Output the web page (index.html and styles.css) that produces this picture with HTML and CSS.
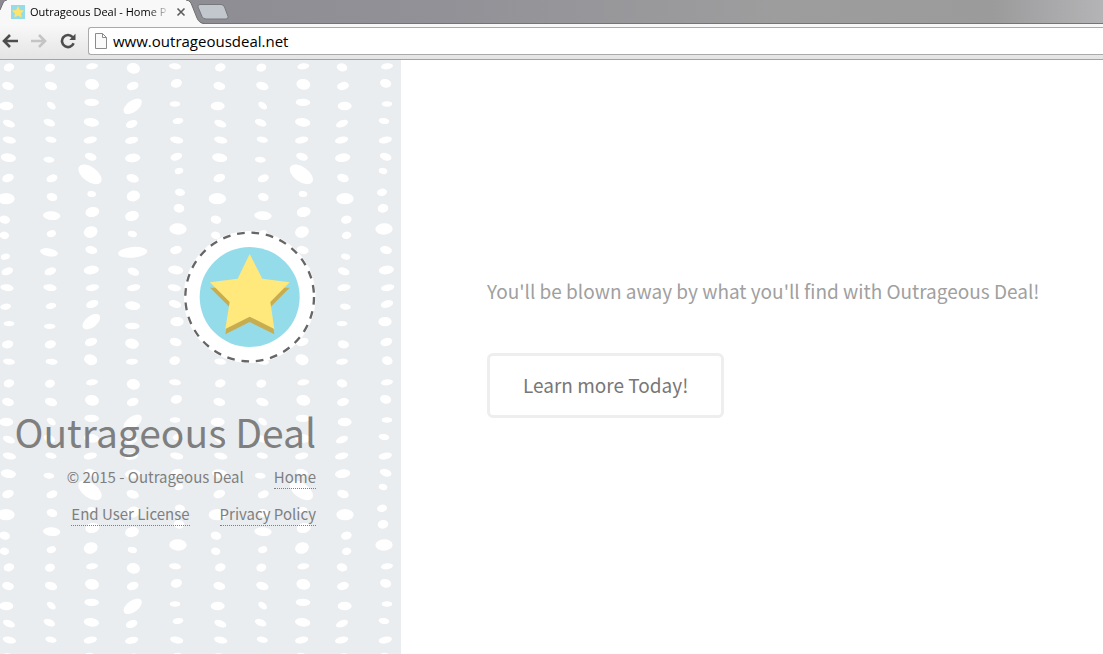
FILE: index.html
```html
<!DOCTYPE html>
<html lang="en">
<head>
    <meta charset="UTF-8">
    <meta name="viewport" content="width=device-width, initial-scale=1.0">
    <title>Outrageous Deal - Home Page</title>
    <link rel="stylesheet" href="styles.css">
</head>
<body>
    <header class="browser">
        <div class="tabstrip">
            <div class="tab">
                <svg class="tab-shape" width="204" height="24" viewBox="0 0 204 24" aria-hidden="true">
                    <path d="M0 24V10L3 3Q4 0 7 0H186Q189 0 191 3L197 18Q199 23 204 24Z" fill="#f8f8f8"/>
                    <path d="M0 10L3 3Q4 0 7 0M186 0Q189 0 191 3L197 18Q199 23 204 23.500" fill="none" stroke="#6f6f72"/>
                </svg>
                <svg class="favicon" width="14" height="14" viewBox="0 0 14 14" aria-hidden="true">
                    <rect width="14" height="14" fill="#95dceb"/>
                    <path d="M7 1L8.800 5L13 5.500L10 8.500L10.700 12.600L7 10.600L3.300 12.600L4 8.500L1 5.500L5.200 5Z" fill="#ffe36b"/>
                </svg>
                <span class="tab-title">Outrageous Deal - Home P</span>
                <button class="tab-close" type="button" aria-label="Close tab">
                    <svg width="10" height="10" viewBox="0 0 10 10"><path d="M1.500 1.500L8.500 8.500M8.500 1.500L1.500 8.500" stroke="#5c5c5c" stroke-width="1.600"/></svg>
                </button>
            </div>
            <button class="new-tab" type="button" aria-label="New tab">
                <svg width="32" height="16" viewBox="0 0 32 16"><path d="M3 .5H24Q26.500 .5 27.500 3L31 12.500Q31.500 15 29 15H9Q6 15 5 12.500L1 3Q.500 .5 3 .5Z" fill="#c2c7cd" stroke="#77787c"/></svg>
            </button>
        </div>
        <nav class="toolbar">
            <button type="button" aria-label="Back">
                <svg width="18" height="16" viewBox="0 0 18 16"><path d="M10 2L4 8L10 14M4.500 8H18" fill="none" stroke="#4d4d4d" stroke-width="2.600"/></svg>
            </button>
            <button type="button" aria-label="Forward">
                <svg width="18" height="16" viewBox="0 0 18 16"><path d="M9 2L15 8L9 14M14.500 8H1" fill="none" stroke="#c4c4c4" stroke-width="2.600"/></svg>
            </button>
            <button type="button" aria-label="Reload">
                <svg width="16" height="16" viewBox="0 0 16 16"><path d="M12.600 4.200A6 6 0 1 0 13.600 10.200" fill="none" stroke="#4d4d4d" stroke-width="2.600"/><path d="M15.500 .8V7H9.300Z" fill="#4d4d4d"/></svg>
            </button>
            <div class="address">
                <svg width="12" height="16" viewBox="0 0 12 16" aria-hidden="true"><path d="M.5 .5H7.500L11.500 4.500V15.500H.5ZM7.500 .5V4.500H11.500" fill="#fafafa" stroke="#8b8b8b"/></svg>
                <input type="text" aria-label="Address" value="www.outrageousdeal.net">
            </div>
        </nav>
    </header>

    <div class="page">
        <aside class="sidebar">
            <svg class="beads" width="401" height="594" viewBox="0 6 1203 1782" aria-hidden="true">
                <defs>
                    <!-- upper part of each column -->
                    <g id="a0">
                        <ellipse rx="16" ry="12" transform="translate(27 28) rotate(-15)"/>
                        <ellipse rx="18" ry="12" transform="translate(24 84) rotate(15)"/>
                        <ellipse rx="21" ry="13" transform="translate(19 144)"/>
                        <ellipse rx="19" ry="10" transform="translate(27 197) rotate(22)"/>
                        <ellipse rx="20" ry="10" transform="translate(28 246) rotate(12)"/>
                        <ellipse rx="23" ry="13" transform="translate(25 299) rotate(8)"/>
                        <ellipse rx="18" ry="12" transform="translate(24 360) rotate(-20)"/>
                        <ellipse rx="26" ry="17" transform="translate(18 422)"/>
                        <ellipse rx="16" ry="12" transform="translate(14 485) rotate(12)"/>
                        <ellipse rx="14" ry="11" transform="translate(13 532) rotate(10)"/>
                    </g>
                    <g id="a1">
                        <ellipse rx="15" ry="12" transform="translate(150 29) rotate(-15)"/>
                        <ellipse rx="19" ry="12" transform="translate(153 84) rotate(18)"/>
                        <ellipse rx="15" ry="9" transform="translate(154 143) rotate(38)"/>
                        <ellipse rx="18" ry="10" transform="translate(148 194) rotate(22)"/>
                        <ellipse rx="17" ry="9" transform="translate(153 245) rotate(12)"/>
                        <ellipse rx="16" ry="9" transform="translate(147 305) rotate(5)"/>
                        <ellipse rx="17" ry="11" transform="translate(156 361) rotate(-20)"/>
                        <ellipse rx="16" ry="12" transform="translate(156 417) rotate(15)"/>
                        <ellipse rx="26" ry="13" transform="translate(155 473) rotate(4)"/>
                        <ellipse rx="14" ry="10" transform="translate(154 527) rotate(-15)"/>
                    </g>
                    <g id="a2">
                        <ellipse rx="18" ry="9" transform="translate(276 25) rotate(-8)"/>
                        <ellipse rx="21" ry="16" transform="translate(276 79) rotate(10)"/>
                        <ellipse rx="22" ry="11" transform="translate(275 133) rotate(2)"/>
                        <ellipse rx="23" ry="13" transform="translate(274 193) rotate(8)"/>
                        <ellipse rx="20" ry="10" transform="translate(271 246) rotate(-10)"/>
                        <ellipse rx="18" ry="11" transform="translate(272 296) rotate(18)"/>
                        <ellipse rx="40" ry="22" transform="translate(270 349) rotate(36)"/>
                        <ellipse rx="13" ry="9" transform="translate(275 408) rotate(8)"/>
                        <ellipse rx="21" ry="15" transform="translate(277 462) rotate(-12)"/>
                        <ellipse rx="21" ry="17" transform="translate(272 522) rotate(-15)"/>
                    </g>
                    <g id="a3">
                        <ellipse rx="20" ry="16" transform="translate(400 31) rotate(12)"/>
                        <ellipse rx="18" ry="12" transform="translate(398 84) rotate(-18)"/>
                        <ellipse rx="32" ry="17" transform="translate(398 145) rotate(-36)"/>
                        <ellipse rx="18" ry="11" transform="translate(395 198) rotate(-20)"/>
                        <ellipse rx="20" ry="10" transform="translate(395 247) rotate(-12)"/>
                        <ellipse rx="23" ry="13" transform="translate(398 300) rotate(-6)"/>
                        <ellipse rx="19" ry="12" transform="translate(398 361) rotate(18)"/>
                        <ellipse rx="20" ry="16" transform="translate(400 414) rotate(-12)"/>
                        <ellipse rx="21" ry="15" transform="translate(396 474) rotate(-15)"/>
                        <ellipse rx="14" ry="9" transform="translate(397 528) rotate(12)"/>
                    </g>
                    <g id="a4">
                        <ellipse rx="18" ry="9" transform="translate(525 25) rotate(8)"/>
                        <ellipse rx="17" ry="13" transform="translate(529 76) rotate(-15)"/>
                        <ellipse rx="16" ry="8" transform="translate(525 138)"/>
                        <ellipse rx="16" ry="9" transform="translate(534 189) rotate(-8)"/>
                        <ellipse rx="20" ry="10" transform="translate(530 246) rotate(10)"/>
                        <ellipse rx="18" ry="11" transform="translate(529 296) rotate(-18)"/>
                        <ellipse rx="13" ry="9" transform="translate(537 339) rotate(-12)"/>
                        <ellipse rx="15" ry="11" transform="translate(540 403) rotate(12)"/>
                        <ellipse rx="16" ry="13" transform="translate(537 451) rotate(12)"/>
                        <ellipse rx="26" ry="17" transform="translate(534 513) rotate(2)"/>
                    </g>
                    <!-- lower part of each column -->
                    <g id="b0">
                        <ellipse rx="14" ry="9" transform="translate(16 596) rotate(-15)"/>
                        <ellipse rx="18" ry="11" transform="translate(22 640) rotate(-20)"/>
                        <ellipse rx="20" ry="10" transform="translate(21 689) rotate(8)"/>
                        <ellipse rx="16" ry="9" transform="translate(17 746) rotate(-8)"/>
                        <ellipse rx="16" ry="8" transform="translate(27 797)"/>
                        <ellipse rx="17" ry="12" transform="translate(23 859) rotate(-10)"/>
                        <ellipse rx="18" ry="9" transform="translate(27 911) rotate(8)"/>
                    </g>
                    <g id="b1">
                        <ellipse rx="27" ry="12" transform="translate(147 583) rotate(10)"/>
                        <ellipse rx="18" ry="11" transform="translate(151 640) rotate(-20)"/>
                        <ellipse rx="20" ry="10" transform="translate(150 689) rotate(8)"/>
                        <ellipse rx="16" ry="9" transform="translate(153 744) rotate(-12)"/>
                        <ellipse rx="17" ry="8" transform="translate(149 805)"/>
                        <ellipse rx="17" ry="12" transform="translate(151 859) rotate(-12)"/>
                        <ellipse rx="18" ry="9" transform="translate(155 911) rotate(5)"/>
                    </g>
                    <g id="b2">
                        <ellipse rx="18" ry="12" transform="translate(274 576) rotate(15)"/>
                        <ellipse rx="23" ry="13" transform="translate(274 636) rotate(-8)"/>
                        <ellipse rx="20" ry="10" transform="translate(277 689) rotate(-10)"/>
                        <ellipse rx="19" ry="11" transform="translate(277 738) rotate(-20)"/>
                        <ellipse rx="31" ry="17" transform="translate(274 791) rotate(-38)"/>
                        <ellipse rx="19" ry="12" transform="translate(273 852) rotate(-18)"/>
                        <ellipse rx="20" ry="16" transform="translate(272 905) rotate(20)"/>
                    </g>
                    <g id="b3">
                        <ellipse rx="44" ry="16" transform="translate(398 583) rotate(-5)"/>
                        <ellipse rx="18" ry="11" transform="translate(400 641) rotate(22)"/>
                        <ellipse rx="20" ry="10" transform="translate(401 689) rotate(-10)"/>
                        <ellipse rx="23" ry="13" transform="translate(398 743) rotate(8)"/>
                        <ellipse rx="22" ry="10" transform="translate(397 804) rotate(2)"/>
                        <ellipse rx="21" ry="15" transform="translate(396 857) rotate(12)"/>
                        <ellipse rx="18" ry="9" transform="translate(396 911) rotate(-3)"/>
                    </g>
                    <g id="b4">
                        <ellipse rx="18" ry="12" transform="translate(528 576) rotate(-15)"/>
                        <ellipse rx="23" ry="13" transform="translate(527 636) rotate(8)"/>
                        <ellipse rx="20" ry="10" transform="translate(523 689) rotate(10)"/>
                        <ellipse rx="19" ry="11" transform="translate(525 738) rotate(15)"/>
                        <ellipse rx="20" ry="14" transform="translate(531 791)"/>
                        <ellipse rx="18" ry="12" transform="translate(527 852) rotate(18)"/>
                        <ellipse rx="16" ry="13" transform="translate(524 908) rotate(-15)"/>
                    </g>
                    <!-- full rows: five columns, three repeated, two mirrored -->
                    <g id="upper">
                        <use href="#a0"/><use href="#a1"/><use href="#a2"/><use href="#a3"/><use href="#a4"/>
                        <use href="#a0" x="634"/><use href="#a1" x="634"/><use href="#a2" x="634"/>
                        <use href="#a0" transform="translate(1053) scale(-1 1)"/>
                        <use href="#a4" transform="translate(1686) scale(-1 1)"/>
                        <!-- mirrored first column sits right of its repeat -->
                    </g>
                    <g id="lower">
                        <use href="#b0"/><use href="#b1"/><use href="#b2"/><use href="#b3"/><use href="#b4"/>
                        <use href="#b0" x="634"/><use href="#b1" x="634"/><use href="#b2" x="634"/>
                        <use href="#b0" transform="translate(1053) scale(-1 1)"/>
                        <use href="#b4" transform="translate(1686) scale(-1 1)"/>
                    </g>
                </defs>
                <g fill="#fff">
                    <use href="#upper"/>
                    <use href="#lower"/>
                    <use href="#upper" y="948"/>
                    <use href="#upper" y="1500"/>
                </g>
            </svg>
            <a class="logo" href="#" aria-label="Outrageous Deal">
                <svg width="132" height="132" viewBox="0 0 396 396">
                    <circle cx="197" cy="198" r="198" fill="#fff"/>
                    <circle cx="197" cy="198" r="193" fill="none" stroke="#666" stroke-width="7" stroke-dasharray="23 20.500"/>
                    <circle cx="197" cy="198" r="150" fill="#95dceb"/>
                    <path d="M78 170L317 170L259 229L271 310L197 273L124 310L137 229Z" fill="#c7ad50"/>
                    <path d="M197 69L235 143L317 154L259 213L271 294L197 257L124 294L137 213L78 154L161 143Z" fill="#ffe87c"/>
                </svg>
            </a>
            <h1>Outrageous Deal</h1>
            <ul class="links">
                <li>© 2015 - Outrageous Deal</li>
                <li><a href="#">Home</a></li>
                <li><a href="#">End User License</a></li>
                <li><a href="#">Privacy Policy</a></li>
            </ul>
        </aside>
        <main class="content">
            <p>You'll be blown away by what you'll find with Outrageous Deal!</p>
            <a class="button" href="#">Learn more Today!</a>
        </main>
    </div>
</body>
</html>
```
FILE: styles.css
```css
* {
    box-sizing: border-box;
}

body {
    margin: 0;
    min-height: 100vh;
    display: flex;
    flex-direction: column;
    background: #fff;
    color: #7f7f7f;
    font-family: "Noto Sans CJK SC", "Open Sans", sans-serif;
    font-weight: 400;
}

.browser {
    font-family: "Open Sans", sans-serif;
    color: #000;
}

.browser button {
    display: flex;
    padding: 0;
    border: 0;
    background: none;
    cursor: pointer;
}

.tabstrip {
    display: flex;
    height: 24px;
    background: linear-gradient(to right, #8b8a92 0, #929197 40%, #9d9d9e 70%, #9b9b9c 90%, #b4b4b6 100%);
    border-bottom: 1px solid #747476;
}

.tab {
    position: relative;
    display: flex;
    align-items: center;
    width: 196px;
    height: 24px;
    padding-left: 11px;
}

.tab-shape {
    position: absolute;
    left: 0;
    top: 0;
}

.favicon,
.tab-title,
.tab-close {
    position: relative;
    flex: none;
}

.tab-title {
    width: 140px;
    margin: 0 6px 0 5px;
    white-space: nowrap;
    font-size: 11px;
    line-height: 24px;
    -webkit-mask-image: linear-gradient(to right, #000 118px, transparent 140px);
    mask-image: linear-gradient(to right, #000 118px, transparent 140px);
}

.browser .new-tab {
    margin: 4px 0 0 1px;
}

.toolbar {
    display: flex;
    align-items: center;
    height: 36px;
    padding-bottom: 1px;
    gap: 12px;
    background: linear-gradient(#f9f9f9, #e4e4e4);
    border-bottom: 1px solid #a3a3a1;
}

.address {
    flex: 1;
    display: flex;
    align-items: center;
    gap: 6px;
    height: 28px;
    padding-left: 6px;
    background: #fff;
    border: 1px solid #aaa;
    border-right: 0;
    border-radius: 3px 0 0 3px;
}

.address input {
    flex: 1;
    padding: 0;
    border: 0;
    outline: 0;
    background: none;
    color: #000;
    font: 15px/24px "Open Sans", sans-serif;
}

.page {
    flex: 1;
    display: flex;
}

.sidebar {
    position: relative;
    flex: none;
    display: flex;
    flex-direction: column;
    align-items: flex-end;
    width: 401px;
    padding: 171px 85px 0 0;
    overflow: hidden;
    background: #e9edf0;
}

.beads {
    position: absolute;
    left: 0;
    top: 0;
}

.logo,
.sidebar h1,
.links {
    position: relative;
}

.logo svg {
    display: block;
}

.sidebar h1 {
    margin: 38px 0 0;
    font-size: 39px;
    font-weight: 400;
    line-height: 60px;
    white-space: nowrap;
}

.links {
    display: flex;
    flex-wrap: wrap;
    justify-content: flex-end;
    gap: 13px 30px;
    margin: 4px 0 0;
    padding: 0;
    list-style: none;
    font-size: 15px;
    line-height: 24px;
}

.links a {
    display: block;
    border-bottom: 1px dotted #7f7f7f;
    color: inherit;
    text-decoration: none;
    line-height: 23px;
}

.content {
    flex: 1;
    padding: 213px 0 0 86px;
    font-size: 19px;
}

.content p {
    margin: 0 0 44px;
    color: #a0a0a0;
    line-height: 36px;
}

.button {
    display: inline-block;
    padding: 0 33px 2px;
    border: 3px solid #eee;
    border-radius: 6px;
    color: #777;
    text-decoration: none;
    line-height: 57px;
}
```
